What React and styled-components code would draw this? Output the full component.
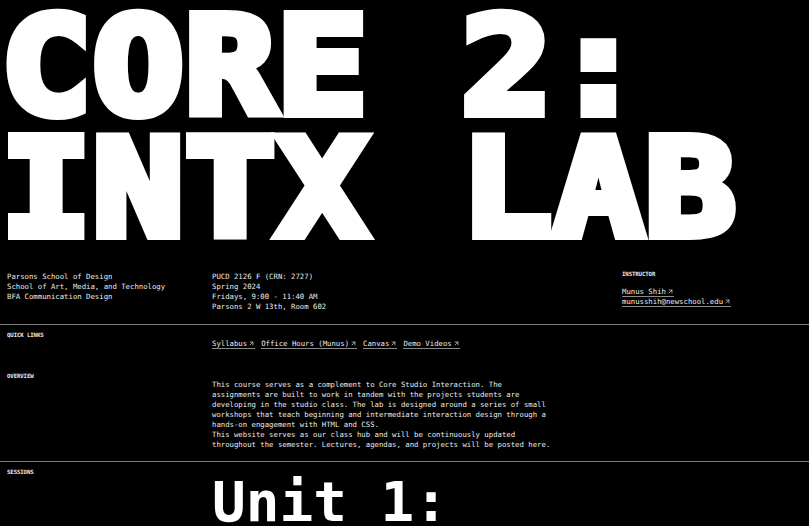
import React from 'react';
import styled, { createGlobalStyle } from 'styled-components';
import { ArrowUpRight } from 'lucide-react';

const GlobalStyle = createGlobalStyle`
  html, body {
    margin: 0;
    padding: 0;
    background: #000;
    color: #ececec;
    font-family: "DejaVu Sans Mono", "Liberation Mono", monospace;
  }
  * { box-sizing: border-box; }
`;

const links = ['Syllabus', 'Office Hours (Munus)', 'Canvas', 'Demo Videos'];

const overview = [
  'This course serves as a complement to Core Studio Interaction. The',
  'assignments are built to work in tandem with the projects students are',
  'developing in the studio class. The lab is designed around a series of small',
  'workshops that teach beginning and intermediate interaction design through a',
  'hands-on engagement with HTML and CSS.',
  'This website serves as our class hub and will be continuously updated',
  'throughout the semester. Lectures, agendas, and projects will be posted here.',
];

const Ext = ({ children }) => (
  <Link>
    {children}
    <ArrowUpRight size={7} strokeWidth={2.2} />
  </Link>
);

export default function App() {
  return (
    <Page>
      <GlobalStyle />
      <Title>
        <TitleLine>CORE 2:</TitleLine>
        <TitleLine>INTX LAB</TitleLine>
      </Title>

      <Info>
        <Block>
          <div>Parsons School of Design</div>
          <div>School of Art, Media, and Technology</div>
          <div>BFA Communication Design</div>
        </Block>
        <Block>
          <div>PUCD 2126 F (CRN: 2727)</div>
          <div>Spring 2024</div>
          <div>Fridays, 9:00 - 11:40 AM</div>
          <div>Parsons 2 W 13th, Room 602</div>
        </Block>
        <Block>
          <Label $gap>INSTRUCTOR</Label>
          <Stack>
            <Ext>Munus Shih</Ext>
            <Ext>munusshih@newschool.edu</Ext>
          </Stack>
        </Block>
      </Info>

      <Section $divider $bottom={17}>
        <Label>QUICK LINKS</Label>
        <Content>
          <LinkRow>
            {links.map((l) => (
              <Ext key={l}>{l}</Ext>
            ))}
          </LinkRow>
        </Content>
      </Section>

      <Section $bottom={11}>
        <Label>OVERVIEW</Label>
        <Content>
          <Block>
            {overview.map((l, i) => (
              <div key={i}>{l}</div>
            ))}
          </Block>
        </Content>
      </Section>

      <Section $divider $bottom={0}>
        <Label>SESSIONS</Label>
        <Content>
          <Unit>Unit 1:</Unit>
        </Content>
      </Section>
    </Page>
  );
}

const Page = styled.div`
  width: 809px;
  height: 526px;
  overflow: hidden;
  background: #000;
`;

const Title = styled.h1`
  margin: 6px 0 0;
  padding-left: 1px;
  font-family: "DejaVu Sans Mono", monospace;
  font-weight: 700;
  font-size: 134px;
  line-height: 122px;
  letter-spacing: 1.5px;
  color: #fff;
  -webkit-text-stroke: 10px #fff;
  white-space: pre;
`;

const TitleLine = styled.div`
  transform: scaleX(1.12);
  transform-origin: left center;
`;

const Info = styled.div`
  display: grid;
  grid-template-columns: 205px 410px 1fr;
  padding: 22px 7px 12px;
`;

const Block = styled.div`
  font-size: 7.3px;
  line-height: 10px;
  white-space: pre;
`;

const Label = styled.div`
  grid-column: 1 / -1;
  font-family: "DejaVu Sans Mono", monospace;
  font-weight: 700;
  font-size: 5.7px;
  line-height: 8px;
  letter-spacing: -0.1px;
  margin: ${(p) => (p.$gap ? '-2px 0 9px' : '0')};
`;

const Section = styled.section`
  display: grid;
  grid-template-columns: 205px 1fr;
  padding: 6px 7px ${(p) => p.$bottom}px;
  border-top: ${(p) => (p.$divider ? '1px solid #7a7a7a' : 'none')};
`;

const Content = styled.div`
  grid-column: 2;
`;

const LinkRow = styled.div`
  display: flex;
  gap: 6px;
  line-height: 12px;
`;

const Stack = styled.div`
  display: flex;
  flex-direction: column;
  align-items: flex-start;
`;

const Link = styled.a`
  display: inline-flex;
  align-items: center;
  gap: 1px;
  font-size: 7.3px;
  line-height: 9px;
  color: #ececec;
  text-decoration: none;
  border-bottom: 1px solid #8a8a8a;
  white-space: pre;
`;

const Unit = styled.div`
  font-family: "DejaVu Sans Mono", monospace;
  font-weight: 700;
  font-size: 56px;
  line-height: 52px;
  color: #fff;
  white-space: pre;
`;
